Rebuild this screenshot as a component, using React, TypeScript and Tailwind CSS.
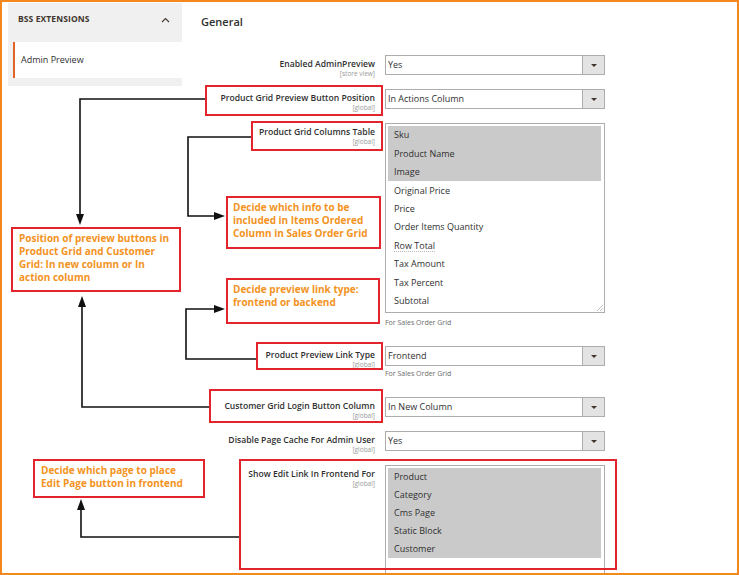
import React from "react";

const font = { fontFamily: '"Open Sans", "Liberation Sans", sans-serif' };

function Caret() {
  return (
    <div className="w-0 h-0 border-l-[3px] border-r-[3px] border-t-[3px] border-l-transparent border-r-transparent border-t-[#41362f]" />
  );
}

function Select({ value }: { value: string }) {
  return (
    <div className="h-[20px] w-[220px] border border-[#adadad] flex bg-white">
      <div className="flex-1 pl-[2px] text-[9px] leading-[18px] text-[#303030]">{value}</div>
      <div className="w-[22px] border-l border-[#adadad] bg-[#e3e3e3] flex items-center justify-center">
        <Caret />
      </div>
    </div>
  );
}

function Label({ text, scope }: { text: string; scope: string }) {
  return (
    <div className="w-[203px] h-[20px] shrink-0 pr-[10px] pt-[4px] text-right">
      <div className="text-[8.6px] leading-[11px] font-semibold text-[#303030] whitespace-nowrap">{text}</div>
      <div className="text-[6.5px] leading-[8px] text-[#9a9a9a] whitespace-nowrap">{scope}</div>
    </div>
  );
}

function MultiSelect({
  items,
  selected,
  height,
  itemClass,
  resize,
}: {
  items: string[];
  selected: number;
  height: string;
  itemClass: string;
  resize?: boolean;
}) {
  return (
    <div className={`relative w-[220px] border border-[#adadad] bg-white pt-[2px] pl-[2px] pr-[3px] ${height}`}>
      {items.map((it, i) => (
        <div
          key={it}
          className={`${itemClass} pl-[6px] flex items-center text-[9px] text-[#303030] whitespace-nowrap ${
            i < selected ? "bg-[#cacaca]" : ""
          }`}
        >
          {it === "Row Total" ? (
            <span className="underline decoration-dotted decoration-[#bbbbbb] underline-offset-2">{it}</span>
          ) : (
            it
          )}
        </div>
      ))}
      {resize && (
        <svg className="absolute right-[1px] bottom-[1px]" width="7" height="7" viewBox="0 0 7 7">
          <line x1="1" y1="7" x2="7" y2="1" stroke="#b0b0b0" strokeWidth="0.8" />
          <line x1="4" y1="7" x2="7" y2="4" stroke="#b0b0b0" strokeWidth="0.8" />
        </svg>
      )}
    </div>
  );
}

function Note({ className }: { className: string }) {
  return <div className={`${className} text-[7px] leading-[12px] text-[#6b6b6b] whitespace-nowrap`}>For Sales Order Grid</div>;
}

export default function App() {
  return (
    <div
      className="relative w-[739px] h-[575px] overflow-hidden bg-white border-2 border-[#f5871f]"
      style={font}
    >
      <div className="flex">
        {/* Sidebar */}
        <aside className="ml-[6px] mt-[1px] w-[174px] h-[83px] shrink-0 bg-[#f0f0f0] flex flex-col">
          <div className="h-[33px] flex items-center justify-between pl-[10px] pr-[12px]">
            <span className="text-[8.5px] font-bold tracking-[0.1px] text-[#41362f]">BSS EXTENSIONS</span>
            <svg width="9" height="6" viewBox="0 0 9 6">
              <polyline points="1,5 4.5,1.5 8,5" fill="none" stroke="#41362f" strokeWidth="1.1" />
            </svg>
          </div>
          <div className="mt-[6px] ml-[5px] h-[36px] bg-white border-l-2 border-[#e0642a] pl-[6px] flex items-center">
            <span className="text-[9px] text-[#303030]">Admin Preview</span>
          </div>
        </aside>

        {/* Main */}
        <main className="flex-1">
          <div className="ml-[19px] mt-[13px] text-[11px] leading-[14px] font-semibold text-[#303030]">General</div>

          <div className="mt-[26px] flex flex-col">
            <div className="flex items-start mb-[14px]">
              <Label text="Enabled AdminPreview" scope="[store view]" />
              <Select value="Yes" />
            </div>
            <div className="flex items-start mb-[14px]">
              <Label text="Product Grid Preview Button Position" scope="[global]" />
              <Select value="In Actions Column" />
            </div>
            <div className="flex items-start mb-[14px]">
              <Label text="Product Grid Columns Table" scope="[global]" />
              <div className="flex flex-col">
                <MultiSelect
                  height="h-[190px]"
                  itemClass="h-[18.4px]"
                  selected={3}
                  resize
                  items={[
                    "Sku",
                    "Product Name",
                    "Image",
                    "Original Price",
                    "Price",
                    "Order Items Quantity",
                    "Row Total",
                    "Tax Amount",
                    "Tax Percent",
                    "Subtotal",
                  ]}
                />
                <Note className="h-[19px] pt-[4px]" />
              </div>
            </div>
            <div className="flex items-start mb-[12px]">
              <Label text="Product Preview Link Type" scope="[global]" />
              <div className="flex flex-col">
                <Select value="Frontend" />
                <Note className="h-[19px] pt-[2px]" />
              </div>
            </div>
            <div className="flex items-start mb-[14px]">
              <Label text="Customer Grid Login Button Column" scope="[global]" />
              <Select value="In New Column" />
            </div>
            <div className="flex items-start mb-[14px]">
              <Label text="Disable Page Cache For Admin User" scope="[global]" />
              <Select value="Yes" />
            </div>
            <div className="flex items-start">
              <Label text="Show Edit Link In Frontend For" scope="[global]" />
              <MultiSelect
                height="h-[130px]"
                itemClass="h-[18px]"
                selected={5}
                items={["Product", "Category", "Cms Page", "Static Block", "Customer"]}
              />
            </div>
          </div>
        </main>
      </div>

      {/* Annotation overlay (page coordinates) */}
      <div className="absolute left-[-2px] top-[-2px] w-[739px] h-[575px] pointer-events-none">
        {/* Red highlight frames */}
        <div className="absolute left-[205px] top-[85px] w-[178px] h-[31px] border-2 border-[#e2252c]" />
        <div className="absolute left-[251px] top-[121px] w-[132px] h-[30px] border-2 border-[#e2252c]" />
        <div className="absolute left-[256px] top-[342px] w-[127px] h-[28px] border-2 border-[#e2252c]" />
        <div className="absolute left-[209px] top-[389px] w-[174px] h-[34px] border-2 border-[#e2252c]" />
        <div className="absolute left-[239px] top-[459px] w-[378px] h-[111px] border-2 border-[#e2252c]" />

        {/* Callouts */}
        <div className="absolute left-[226px] top-[196px] w-[155px] h-[53px] border-2 border-[#e2252c] bg-white pl-[5px] pt-[3px] text-[10px] leading-[13px] font-bold text-[#f39322] whitespace-nowrap">
          Decide which info to be
          <br />
          included in Items Ordered
          <br />
          Column in Sales Order Grid
        </div>
        <div className="absolute left-[11px] top-[227px] w-[170px] h-[65px] border-2 border-[#e2252c] bg-white pl-[6px] pt-[3px] text-[10px] leading-[13px] font-bold text-[#f39322] whitespace-nowrap">
          Position of preview buttons in
          <br />
          Product Grid and Customer
          <br />
          Grid: In new column or In
          <br />
          action column
        </div>
        <div className="absolute left-[226px] top-[278px] w-[154px] h-[46px] border-2 border-[#e2252c] bg-white pl-[5px] pt-[3px] text-[10px] leading-[13px] font-bold text-[#f39322] whitespace-nowrap">
          Decide preview link type:
          <br />
          frontend or backend
        </div>
        <div className="absolute left-[33px] top-[459px] w-[172px] h-[39px] border-2 border-[#e2252c] bg-white pl-[6px] pt-[3px] text-[10px] leading-[13px] font-bold text-[#f39322] whitespace-nowrap">
          Decide which page to place
          <br />
          Edit Page button in frontend
        </div>

        {/* Arrows */}
        <svg className="absolute left-0 top-0" width="739" height="575" viewBox="0 0 739 575">
          <g fill="none" stroke="#111111" strokeWidth="1.6">
            <polyline points="205,99 80,99 80,216" />
            <polyline points="251,137 188,137 188,216 215,216" />
            <polyline points="256,359 186,359 186,309 215,309" />
            <polyline points="209,407 82,407 82,306" />
            <polyline points="239,537 81,537 81,509" />
          </g>
          <g fill="#111111">
            <polygon points="76,214 84,214 80,225" />
            <polygon points="214,212 214,220 225,216" />
            <polygon points="214,305 214,313 225,309" />
            <polygon points="78,307 86,307 82,296" />
            <polygon points="77,510 85,510 81,499" />
          </g>
        </svg>
      </div>
    </div>
  );
}
